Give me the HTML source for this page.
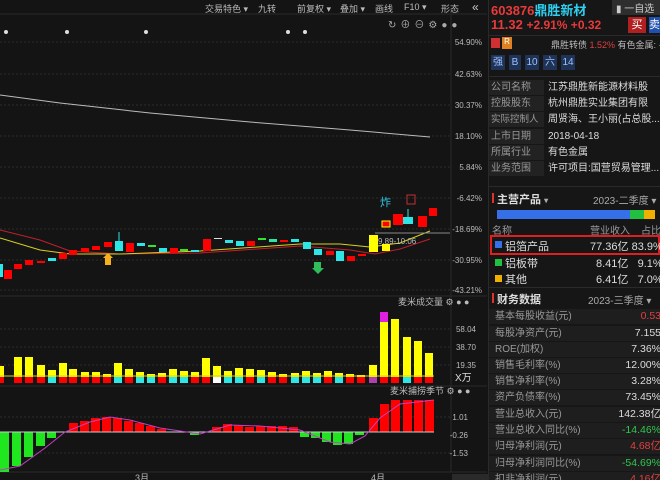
<!DOCTYPE html>
<html><head><meta charset="utf-8"><style>
*{margin:0;padding:0;box-sizing:border-box}
body{width:660px;height:480px;background:#141414;overflow:hidden;position:relative;font-family:"Liberation Sans","Noto Sans CJK SC",sans-serif;color:#ccc}
.a{position:absolute;white-space:nowrap}
.tb{font-size:9px;color:#bbb;top:2px}
.rp{position:absolute;left:488px;top:0;width:172px;height:480px;background:#161616;border-left:1px solid #2a2a2a;overflow:hidden}
.row{position:absolute;left:0;width:172px;height:15px;font-size:10px;line-height:15px;overflow:hidden}
.lab{position:absolute;left:0;width:55px;height:15px;background:#222;color:#999;padding-left:2px;overflow:hidden}
.val{position:absolute;left:59px;width:113px;overflow:hidden;color:#ddd}
.fr{position:absolute;left:0;width:172px;height:15px;background:#1e1e1e;font-size:10px;line-height:15px;color:#999;padding-left:6px}
.fr span{position:absolute;right:0;color:#ddd;font-size:10.5px}
.tag{position:absolute;top:55px;height:15px;background:#1f3357;color:#9cc0ff;font-size:10px;line-height:15px;text-align:center}
</style></head><body>
<svg class="a" style="left:0;top:0" width="488" height="480">
<line x1="0" y1="14" x2="487" y2="14" stroke="#2a2a2a"/>
<g stroke="#2c2c2c" stroke-dasharray="2,2">
<line x1="0" y1="42" x2="450" y2="42"/><line x1="0" y1="74" x2="450" y2="74"/><line x1="0" y1="105" x2="450" y2="105"/><line x1="0" y1="136" x2="450" y2="136"/><line x1="0" y1="167" x2="450" y2="167"/><line x1="0" y1="198" x2="450" y2="198"/><line x1="0" y1="229" x2="450" y2="229"/><line x1="0" y1="260" x2="450" y2="260"/><line x1="0" y1="290" x2="450" y2="290"/>
<line x1="0" y1="329" x2="450" y2="329"/><line x1="0" y1="347" x2="450" y2="347"/><line x1="0" y1="365" x2="450" y2="365"/>
<line x1="0" y1="417" x2="450" y2="417"/><line x1="0" y1="453" x2="450" y2="453"/>
</g>
<line x1="451" y1="14" x2="451" y2="472" stroke="#2a2a2a"/>
<line x1="0" y1="296" x2="487" y2="296" stroke="#2a2a2a"/>
<line x1="0" y1="386" x2="487" y2="386" stroke="#2a2a2a"/>
<line x1="0" y1="472" x2="487" y2="472" stroke="#2a2a2a"/>
<g fill="#ddd"><circle cx="6" cy="32" r="2"/><circle cx="67" cy="32" r="2"/><circle cx="146" cy="32" r="2"/><circle cx="288" cy="32" r="2"/><circle cx="305" cy="32" r="2"/></g>
<polyline points="0,95 60,103 150,113 250,122 350,130 430,137" fill="none" stroke="#bbb" stroke-width="1"/>
<polyline points="0,230 40,240 70,251 120,254 200,253 300,246 350,250 375,254 400,249 430,239" fill="none" stroke="#c0202a" stroke-width="1"/>
<polyline points="0,238 40,250 70,254 120,254 200,251 300,244 340,244 370,247 400,243 430,231" fill="none" stroke="#d8d020" stroke-width="1"/>
<line x1="375" y1="233" x2="450" y2="233" stroke="#888"/>
<g stroke-width="1">
<rect x="0" y="264" width="3" height="13" fill="#2ee6e6"/>
<rect x="4" y="270" width="8" height="9" fill="#f00"/>
<rect x="14" y="264" width="8" height="5" fill="#f00"/>
<rect x="25" y="260" width="8" height="5" fill="#f00"/>
<rect x="37" y="261" width="8" height="2" fill="#f00"/>
<rect x="48" y="258" width="8" height="3" fill="#2ee6e6"/>
<rect x="59" y="253" width="8" height="6" fill="#f00"/>
<rect x="69" y="250" width="8" height="5" fill="#f00"/>
<rect x="81" y="248" width="8" height="4" fill="#f00"/>
<rect x="92" y="246" width="8" height="4" fill="#f00"/>
<rect x="104" y="242" width="8" height="5" fill="#f00"/>
<line x1="119" y1="232" x2="119" y2="241" stroke="#2ee6e6"/><rect x="115" y="241" width="8" height="10" fill="#2ee6e6"/>
<rect x="126" y="243" width="8" height="9" fill="#f00"/>
<rect x="137" y="243" width="8" height="3" fill="#2ee6e6"/>
<rect x="148" y="245" width="8" height="2" fill="#2ee62e"/>
<rect x="159" y="248" width="8" height="4" fill="#2ee6e6"/>
<rect x="170" y="248" width="8" height="5" fill="#f00"/>
<rect x="180" y="249" width="8" height="2" fill="#2ee62e"/>
<rect x="191" y="250" width="8" height="2" fill="#2ee6e6"/>
<rect x="203" y="239" width="8" height="12" fill="#f00"/>
<rect x="214" y="238" width="8" height="1" fill="#ddd"/>
<rect x="225" y="240" width="8" height="3" fill="#2ee6e6"/>
<rect x="236" y="241" width="8" height="5" fill="#2ee6e6"/>
<rect x="247" y="241" width="8" height="5" fill="#f00"/>
<rect x="258" y="238" width="8" height="2" fill="#2ee62e"/>
<rect x="269" y="239" width="8" height="3" fill="#2ee6a0"/>
<rect x="280" y="240" width="8" height="2" fill="#f00"/>
<rect x="291" y="239" width="8" height="3" fill="#2ee6e6"/>
<rect x="303" y="242" width="8" height="7" fill="#2ee6e6"/>
<rect x="314" y="249" width="8" height="6" fill="#2ee6e6"/>
<rect x="326" y="251" width="8" height="4" fill="#f00"/>
<rect x="336" y="251" width="8" height="10" fill="#2ee6e6"/>
<rect x="347" y="256" width="8" height="5" fill="#f00"/>
<rect x="358" y="254" width="8" height="2" fill="#f00"/>
<rect x="369" y="235" width="9" height="17" fill="#ffff00"/>
<rect x="382" y="244" width="8" height="7" fill="#ffff00"/>
<rect x="382" y="221" width="8" height="6" fill="#f00" stroke="#ff0"/>
<rect x="393" y="214" width="10" height="11" fill="#f00"/>
<line x1="408" y1="209" x2="408" y2="217" stroke="#2ee6e6"/><rect x="403" y="217" width="10" height="7" fill="#2ee6e6"/>
<rect x="418" y="216" width="9" height="11" fill="#f00"/>
<rect x="429" y="208" width="8" height="8" fill="#f00"/>
<rect x="407" y="195" width="8" height="9" fill="none" stroke="#c03030"/>
</g>
<text x="380" y="206" font-size="11" fill="#2ec8e6" font-family="Noto Sans CJK SC">炸</text>
<text x="378" y="244" font-size="8" fill="#bbb">9.89-10.06</text>
<path d="M103,258 L108,253 L113,258 L111,258 L111,265 L105,265 L105,258Z" fill="#f5b020"/>
<path d="M314,262 L321,262 L321,268 L324,268 L318,274 L312,268 L314,268Z" fill="#2ebd5a"/>
<g font-size="8" fill="#bbb" text-anchor="end">
<text x="482" y="45">54.90%</text><text x="482" y="77">42.63%</text><text x="482" y="108">30.37%</text><text x="482" y="139">18.10%</text><text x="482" y="170">5.84%</text><text x="482" y="201">-6.42%</text><text x="482" y="232">-18.69%</text><text x="482" y="263">-30.95%</text><text x="482" y="293">-43.21%</text>
<text x="476" y="332">58.04</text><text x="476" y="350">38.70</text><text x="476" y="368">19.35</text>
<text x="468" y="420">1.01</text><text x="468" y="438">-0.26</text><text x="468" y="456">-1.53</text>
</g>
<text x="455" y="381" font-size="10" fill="#ddd">X万</text>
<text x="398" y="305" font-size="9" fill="#bbb">麦米成交量 ⚙ ● ●</text>
<text x="390" y="394" font-size="9" fill="#bbb">麦米捕捞季节 ⚙ ● ●</text>
<g fill="#ffff00">
<rect x="0" y="366" width="4" height="12"/><rect x="14" y="357" width="8" height="21"/><rect x="25" y="357" width="8" height="21"/><rect x="37" y="365" width="8" height="13"/><rect x="48" y="370" width="8" height="8"/><rect x="59" y="363" width="8" height="15"/><rect x="69" y="369" width="8" height="9"/><rect x="81" y="372" width="8" height="6"/><rect x="92" y="372" width="8" height="6"/><rect x="103" y="374" width="8" height="4"/><rect x="114" y="363" width="8" height="15"/><rect x="125" y="369" width="8" height="9"/><rect x="136" y="372" width="8" height="6"/><rect x="147" y="374" width="8" height="4"/><rect x="158" y="373" width="8" height="5"/><rect x="169" y="369" width="8" height="9"/><rect x="180" y="371" width="8" height="7"/><rect x="191" y="372" width="8" height="6"/><rect x="202" y="358" width="8" height="20"/><rect x="213" y="366" width="8" height="12"/><rect x="224" y="371" width="8" height="7"/><rect x="235" y="368" width="8" height="10"/><rect x="246" y="369" width="8" height="9"/><rect x="257" y="370" width="8" height="8"/><rect x="268" y="372" width="8" height="6"/><rect x="279" y="374" width="8" height="4"/><rect x="291" y="373" width="8" height="5"/><rect x="302" y="371" width="8" height="7"/><rect x="313" y="373" width="8" height="5"/><rect x="324" y="371" width="8" height="7"/><rect x="335" y="373" width="8" height="5"/><rect x="346" y="374" width="8" height="4"/><rect x="357" y="375" width="8" height="3"/><rect x="369" y="365" width="8" height="13"/><rect x="380" y="312" width="8" height="66"/><rect x="391" y="319" width="8" height="59"/><rect x="403" y="337" width="8" height="41"/><rect x="414" y="341" width="8" height="37"/><rect x="425" y="353" width="8" height="25"/>
</g>
<rect x="380" y="312" width="8" height="10" fill="#e020e0"/>
<g>
<rect x="0" y="377" width="4" height="6" fill="#f00"/><rect x="14" y="377" width="8" height="6" fill="#f00"/><rect x="25" y="377" width="8" height="6" fill="#f00"/><rect x="37" y="377" width="8" height="6" fill="#f00"/><rect x="48" y="377" width="8" height="6" fill="#2ee6e6"/><rect x="59" y="377" width="8" height="6" fill="#f00"/><rect x="69" y="377" width="8" height="6" fill="#f00"/><rect x="81" y="377" width="8" height="6" fill="#f00"/><rect x="92" y="377" width="8" height="6" fill="#f00"/><rect x="103" y="377" width="8" height="6" fill="#f00"/><rect x="114" y="377" width="8" height="6" fill="#2ee6e6"/><rect x="125" y="377" width="8" height="6" fill="#f00"/><rect x="136" y="377" width="8" height="6" fill="#2ee6e6"/><rect x="147" y="377" width="8" height="6" fill="#2ee6e6"/><rect x="158" y="377" width="8" height="6" fill="#f00"/><rect x="169" y="377" width="8" height="6" fill="#2ee6e6"/><rect x="180" y="377" width="8" height="6" fill="#2ee6e6"/><rect x="191" y="377" width="8" height="6" fill="#f00"/><rect x="202" y="377" width="8" height="6" fill="#f00"/><rect x="213" y="377" width="8" height="6" fill="#fff"/><rect x="224" y="377" width="8" height="6" fill="#2ee6e6"/><rect x="235" y="377" width="8" height="6" fill="#2ee6e6"/><rect x="246" y="377" width="8" height="6" fill="#f00"/><rect x="257" y="377" width="8" height="6" fill="#2ee6e6"/><rect x="268" y="377" width="8" height="6" fill="#f00"/><rect x="279" y="377" width="8" height="6" fill="#f00"/><rect x="291" y="377" width="8" height="6" fill="#2ee6e6"/><rect x="302" y="377" width="8" height="6" fill="#2ee6e6"/><rect x="313" y="377" width="8" height="6" fill="#2ee6e6"/><rect x="324" y="377" width="8" height="6" fill="#f00"/><rect x="335" y="377" width="8" height="6" fill="#2ee6e6"/><rect x="346" y="377" width="8" height="6" fill="#f00"/><rect x="357" y="377" width="8" height="6" fill="#f00"/><rect x="369" y="377" width="8" height="6" fill="#b040b0"/><rect x="380" y="377" width="8" height="6" fill="#f00"/><rect x="391" y="377" width="8" height="6" fill="#f00"/><rect x="403" y="377" width="8" height="6" fill="#2ee6e6"/><rect x="414" y="377" width="8" height="6" fill="#f00"/><rect x="425" y="377" width="8" height="6" fill="#f00"/>
</g>
<line x1="0" y1="376" x2="434" y2="376" stroke="#d8d020"/>
<g fill="#1fe61f">
<rect x="0" y="432" width="9" height="40"/><rect x="12" y="432" width="9" height="34"/><rect x="24" y="432" width="9" height="25"/><rect x="36" y="432" width="9" height="14"/><rect x="47" y="432" width="9" height="6"/>
<rect x="190" y="432" width="9" height="3"/><rect x="300" y="432" width="9" height="5"/><rect x="311" y="432" width="9" height="6"/><rect x="322" y="432" width="9" height="10"/><rect x="333" y="432" width="9" height="13"/><rect x="344" y="432" width="9" height="12"/><rect x="355" y="432" width="9" height="3"/>
</g>
<g fill="#f00">
<rect x="69" y="423" width="9" height="9"/><rect x="80" y="421" width="9" height="11"/><rect x="91" y="418" width="9" height="14"/><rect x="102" y="417" width="9" height="15"/><rect x="113" y="418" width="9" height="14"/><rect x="124" y="421" width="9" height="11"/><rect x="135" y="423" width="9" height="9"/><rect x="146" y="426" width="9" height="6"/><rect x="157" y="429" width="9" height="3"/>
<rect x="212" y="427" width="9" height="5"/><rect x="223" y="424" width="9" height="8"/><rect x="234" y="425" width="9" height="7"/><rect x="245" y="427" width="9" height="5"/><rect x="256" y="426" width="9" height="6"/><rect x="267" y="426" width="9" height="6"/><rect x="278" y="426" width="9" height="6"/><rect x="289" y="427" width="9" height="5"/>
<rect x="369" y="418" width="9" height="14"/><rect x="380" y="404" width="9" height="28"/><rect x="391" y="400" width="9" height="32"/><rect x="403" y="400" width="9" height="32"/><rect x="414" y="400" width="9" height="32"/><rect x="425" y="400" width="9" height="32"/>
</g>
<line x1="0" y1="432" x2="434" y2="432" stroke="#ccc"/>
<polyline points="0,470 20,466 45,448 65,432 90,422 110,417 130,420 160,428 200,434 230,425 260,426 300,430 330,442 350,444 365,436 380,418 400,404 434,400" fill="none" stroke="#c040c0"/>
<text x="135" y="481" font-size="9" fill="#bbb">3月</text><text x="371" y="481" font-size="9" fill="#bbb">4月</text>
<rect x="452" y="474" width="36" height="6" fill="#2a2a2a"/>
</svg>
<div class="a tb" style="left:205px">交易特色 ▾</div>
<div class="a tb" style="left:258px">九转</div>
<div class="a tb" style="left:297px">前复权 ▾</div>
<div class="a tb" style="left:340px">叠加 ▾</div>
<div class="a tb" style="left:375px">画线</div>
<div class="a tb" style="left:404px">F10 ▾</div>
<div class="a tb" style="left:441px">形态</div>
<div class="a" style="left:472px;top:0;font-size:12px;color:#ccc">«</div>
<div class="a" style="left:388px;top:16px;font-size:10px;color:#aaa;letter-spacing:4px">↻⊕⊖⚙●●</div>
<div class="rp">
<div class="a" style="left:2px;top:0;font-size:13px;font-weight:bold;color:#e83a3a">603876<span style="color:#2ed0f0">鼎胜新材</span></div>
<div class="a" style="left:123px;top:0;width:50px;height:15px;background:#2e2e2e;font-size:10px;color:#ccc;padding-left:4px">▮ 一自选</div>
<div class="a" style="left:2px;top:17px;font-size:13px;font-weight:bold;color:#e83a3a">11.32 <span style="font-size:12px">+2.91% +0.32</span></div>
<div class="a" style="left:139px;top:17px;width:18px;height:16px;background:#b02020;color:#fff;font-size:11px;text-align:center;line-height:16px">买</div>
<div class="a" style="left:160px;top:17px;width:14px;height:16px;background:#2050b0;color:#fff;font-size:11px;line-height:16px">卖</div>
<div class="a" style="left:0;top:35px;width:172px;border-top:1px solid #2a2a2a"></div>
<div class="a" style="left:2px;top:38px;width:9px;height:10px;background:#d03030"></div>
<div class="a" style="left:13px;top:37px;width:10px;height:12px;background:#e08020;font-size:8px;color:#fff;text-align:center">R</div>
<div class="a" style="left:62px;top:38px;font-size:9px;color:#bbb">鼎胜转债 <span style="color:#e04040">1.52%</span> 有色金属: <span style="color:#2ec84e">-0.19</span></div>
<div class="tag" style="left:2px;width:14px">强</div><div class="tag" style="left:20px;width:12px">B</div><div class="tag" style="left:36px;width:14px">10</div><div class="tag" style="left:54px;width:14px">六</div><div class="tag" style="left:72px;width:14px">14</div>
<div class="a" style="left:0;top:76px;width:172px;border-top:1px solid #2a2a2a"></div>
<div class="row" style="top:80px"><div class="lab">公司名称</div><div class="val">江苏鼎胜新能源材料股份...</div></div>
<div class="row" style="top:96px"><div class="lab">控股股东</div><div class="val">杭州鼎胜实业集团有限公...</div></div>
<div class="row" style="top:112px"><div class="lab" style="font-size:9.5px">实际控制人</div><div class="val">周贤海、王小丽(占总股...</div></div>
<div class="row" style="top:129px"><div class="lab">上市日期</div><div class="val">2018-04-18</div></div>
<div class="row" style="top:145px"><div class="lab">所属行业</div><div class="val">有色金属</div></div>
<div class="row" style="top:161px"><div class="lab">业务范围</div><div class="val">许可项目:国营贸易管理...</div></div>
<div class="a" style="left:0;top:186px;width:172px;border-top:1px solid #2a2a2a"></div>
<div class="a" style="left:3px;top:193px;width:2px;height:10px;background:#e03030"></div>
<div class="a" style="left:8px;top:191px;font-size:11px;font-weight:bold;color:#ddd">主营产品 <span style="font-size:8px;color:#aaa">▾</span></div>
<div class="a" style="left:104px;top:192px;font-size:10px;color:#aaa">2023-二季度 ▾</div>
<div class="a" style="left:8px;top:210px;width:133px;height:9px;background:#3570e8"></div>
<div class="a" style="left:141px;top:210px;width:14px;height:9px;background:#22c040"></div>
<div class="a" style="left:155px;top:210px;width:11px;height:9px;background:#f0b000"></div>
<div class="a" style="left:3px;top:222px;font-size:10px;color:#999">名称</div>
<div class="a" style="left:101px;top:222px;font-size:10px;color:#999">营业收入</div>
<div class="a" style="left:152px;top:222px;font-size:10px;color:#999">占比</div>
<div class="a" style="left:1px;top:235px;width:170px;height:20px;border:2px solid #e02020"></div>
<div class="a" style="left:6px;top:241px;width:7px;height:7px;background:#3570e8"></div>
<div class="a" style="left:16px;top:238px;font-size:11px;color:#ddd">铝箔产品</div>
<div class="a" style="left:101px;top:238px;font-size:11px;color:#ddd">77.36亿 83.9%</div>
<div class="a" style="left:6px;top:259px;width:7px;height:7px;background:#22c040"></div>
<div class="a" style="left:16px;top:255px;font-size:11px;color:#ddd">铝板带</div>
<div class="a" style="left:107px;top:255px;font-size:11px;color:#ddd">8.41亿 &nbsp; 9.1%</div>
<div class="a" style="left:6px;top:275px;width:7px;height:7px;background:#f0b000"></div>
<div class="a" style="left:16px;top:271px;font-size:11px;color:#ddd">其他</div>
<div class="a" style="left:107px;top:271px;font-size:11px;color:#ddd">6.41亿 &nbsp; 7.0%</div>
<div class="a" style="left:0;top:287px;width:172px;border-top:1px solid #2a2a2a"></div>
<div class="a" style="left:3px;top:293px;width:2px;height:10px;background:#e03030"></div>
<div class="a" style="left:8px;top:291px;font-size:11px;font-weight:bold;color:#ddd">财务数据</div>
<div class="a" style="left:99px;top:292px;font-size:10px;color:#aaa">2023-三季度 ▾</div>
<div class="fr" style="top:309px">基本每股收益(元)<span style="color:#e04040">0.53</span></div>
<div class="fr" style="top:326px">每股净资产(元)<span>7.155</span></div>
<div class="fr" style="top:342px">ROE(加权)<span>7.36%</span></div>
<div class="fr" style="top:358px">销售毛利率(%)<span>12.00%</span></div>
<div class="fr" style="top:374px">销售净利率(%)<span>3.28%</span></div>
<div class="fr" style="top:390px">资产负债率(%)<span>73.45%</span></div>
<div class="fr" style="top:407px">营业总收入(元)<span>142.38亿</span></div>
<div class="fr" style="top:423px">营业总收入同比(%)<span style="color:#2ec84e">-14.46%</span></div>
<div class="fr" style="top:439px">归母净利润(元)<span style="color:#e04040">4.68亿</span></div>
<div class="fr" style="top:456px">归母净利润同比(%)<span style="color:#2ec84e">-54.69%</span></div>
<div class="fr" style="top:472px">扣非净利润(元)<span style="color:#e04040">4.16亿</span></div>
</div>
</body></html>
